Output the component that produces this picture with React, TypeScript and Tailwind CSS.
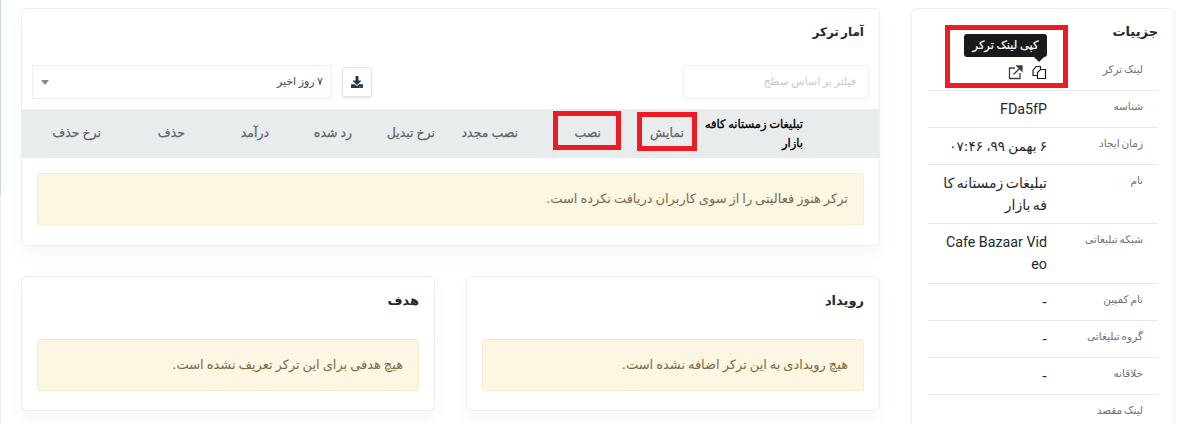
import { FaDownload } from "react-icons/fa";

const ar = "font-['Tahoma','DejaVu_Sans','Noto_Sans','Roboto',sans-serif]";

const cols: [string, string][] = [
  ["نمایش", "w-[83px]"],
  ["نصب", "w-[83px]"],
  ["نصب مجدد", "w-[83px]"],
  ["نرخ تبدیل", "w-[83px]"],
  ["رد شده", "w-[83px]"],
  ["درآمد", "w-[84px]"],
  ["حذف", "w-[84px]"],
  ["نرخ حذف", "w-[84px]"],
];

function Alert({ text }: { text: string }) {
  return (
    <div className="flex h-[52px] items-center rounded-[3px] border border-[#f9ebcb] bg-[#fdf6e3] px-[15px] text-[13px] [word-spacing:-1.2px] text-[#7b6a45]">
      {text}
    </div>
  );
}

function Card({ title, text }: { title: string; text: string }) {
  return (
    <section className="h-[135px] flex-1 rounded-[6px] border border-[#eceef0] bg-white px-[15px] pt-[15px] shadow-[0_10px_20px_rgba(0,0,0,0.03)]">
      <h2 className="h-[47px] text-[13px] leading-[18px] font-bold text-[#26292c]">{title}</h2>
      <Alert text={text} />
    </section>
  );
}

function Row({ label, h, lt = "pt-[1px]", children }: { label: string; h: string; lt?: string; children?: React.ReactNode }) {
  return (
    <div className={`flex border-b border-[#e6e8ec] px-[15px] pt-[7px] ${h}`}>
      <div className={`w-[96px] shrink-0 text-[10.5px] leading-[14px] [word-spacing:-1.5px] text-[#6c7177] ${lt}`}>{label}</div>
      <div className="w-[103px] text-[14px] leading-[22px] text-[#23272b]">{children}</div>
    </div>
  );
}

const latin = "block break-all text-right font-['Roboto',sans-serif] text-[14.25px]";

export default function App() {
  return (
    <div dir="rtl" className={`flex h-[424px] w-[1188px] overflow-hidden bg-white ${ar}`}>
      <aside className="mt-[8px] mr-[13px] h-[500px] w-[264px] shrink-0 rounded-[6px] border border-[#eceef0] bg-white px-[16px] pt-[14px]">
        <h2 className="mb-[10px] text-[13px] leading-[18px] font-bold text-[#26292c]">جزییات</h2>
        <div className="relative">
          <Row label="لینک ترکر" h="h-[40px]" lt="pt-[4px]" />
          <div className="absolute top-[-17px] right-[111px] flex h-[23px] w-[83px] items-center justify-center rounded-[3px] bg-[#1a1a1a] text-[11.5px] [word-spacing:-1px] text-white [-webkit-text-stroke:0.2px_white]">
            کپی لینک ترکر
          </div>
          <div className="absolute top-[6px] right-[114px] h-0 w-0 border-x-[5px] border-t-[5px] border-x-transparent border-t-[#1a1a1a]" />
          <svg className="absolute top-[14px] right-[111px] h-[15px] w-[15px]" viewBox="0 0 15 15" fill="none" stroke="#1c1c2e" strokeWidth="1.2">
            <path d="M5 10.5H1V5.5L4 1.5H8.5V4" />
            <path d="M8.5 4.5H13.5V13.5H5.5V7.5Z" />
          </svg>
          <svg className="absolute top-[14px] right-[135px] h-[15px] w-[15px]" viewBox="0 0 15 15" fill="none" stroke="#3b3f44" strokeWidth="1.3">
            <path d="M7 3H1.5V13.5H12V8" />
            <path d="M5.5 9.5L13 2" />
            <path d="M9 1H14V6Z" fill="#3b3f44" />
          </svg>
          <div className="absolute top-[-26px] right-[90px] h-[63px] w-[123px] border-[5px] border-[#ed1c24]" />
          <Row label="شناسه" h="h-[37px]"><span dir="ltr" className={latin}>FDa5fP</span></Row>
          <Row label="زمان ایجاد" h="h-[37px]"><span className="whitespace-nowrap text-[13.5px] [word-spacing:-1px] tracking-[-0.5px]">۶ بهمن ۹۹، ۰۷:۴۶</span></Row>
          <Row label="نام" h="h-[59px]">
            <span className="block whitespace-nowrap [word-spacing:-2px]">تبلیغات زمستانه کا</span>
            <span className="block whitespace-nowrap [word-spacing:-2px]">فه بازار</span>
          </Row>
          <Row label="شبکه تبلیغاتی" h="h-[60px]"><span dir="ltr" className={latin}>Cafe Bazaar Video</span></Row>
          <Row label="نام کمپین" h="h-[37px]">-</Row>
          <Row label="گروه تبلیغاتی" h="h-[37px]">-</Row>
          <Row label="خلاقانه" h="h-[37px]">-</Row>
          <Row label="لینک مقصد" h="h-[37px]" />
        </div>
      </aside>

      <main className="mt-[8px] mr-[31px] flex w-[859px] shrink-0 flex-col gap-[30px]">
        <section className="h-[238px] rounded-[6px] border border-[#eceef0] bg-white shadow-[0_10px_20px_rgba(0,0,0,0.03)]">
          <h2 className="px-[15px] pt-[14px] text-[12px] leading-[18px] font-bold [word-spacing:-2px] text-[#26292c]">آمار ترکر</h2>
          <div className="mt-[24px] flex items-center px-[10px]">
            <div className="flex h-[34px] w-[186px] items-center rounded-[3px] border border-[#eceef0] px-[12px] text-[11px] [word-spacing:-1px] text-[#c9c9c9]">
              فیلتر بر اساس سطح
            </div>
            <button className="mr-auto flex h-[30px] w-[30px] items-center justify-center rounded-[3px] border border-[#e2e4e6] bg-white shadow-[0_1px_2px_rgba(0,0,0,0.1)]">
              <FaDownload className="h-[12px] w-[12px] text-[#26364a]" />
            </button>
            <div className="mr-[10px] flex h-[34px] w-[300px] items-center justify-between border border-[#eceef0] px-[8px] text-[11px] [word-spacing:-1px] text-[#444]">
              <span>۷ روز اخیر</span>
              <span className="h-0 w-0 border-x-[4px] border-t-[5px] border-x-transparent border-t-[#888]" />
            </div>
          </div>
          <div className="relative mt-[10px] flex h-[49px] items-center bg-[#e9eced] pr-[76px] text-[12.5px] [word-spacing:-1px] text-[#5f656b] [-webkit-text-stroke:0.25px_#5f656b]">
            <div className="w-[119px] shrink-0 pl-[10px] text-[11.5px] leading-[19px] text-black [-webkit-text-stroke:0.35px_#000]">
              <span className="block whitespace-nowrap">تبلیغات زمستانه کافه</span>
              <span className="block whitespace-nowrap">بازار</span>
            </div>
            {cols.map(([c, w]) => (
              <div key={c} className={`${w} shrink-0`}>{c}</div>
            ))}
            <div className="absolute top-[2px] right-[258px] h-[39px] w-[68px] border-[5px] border-[#ed1c24]" />
            <div className="absolute top-[3px] right-[182px] h-[39px] w-[60px] border-[5px] border-[#ed1c24]" />
          </div>
          <div className="mt-[15px] px-[15px]">
            <Alert text="ترکر هنوز فعالیتی را از سوی کاربران دریافت نکرده است." />
          </div>
        </section>
        <div className="flex gap-[31px]">
          <Card title="رویداد" text="هیچ رویدادی به این ترکر اضافه نشده است." />
          <Card title="هدف" text="هیچ هدفی برای این ترکر تعریف نشده است." />
        </div>
      </main>

      <div className="mr-[20px] h-[424px] w-[1px] shrink-0 bg-[#eef1f2]">
        <div className="h-[195px] bg-[#cfd6da]" />
      </div>
    </div>
  );
}
